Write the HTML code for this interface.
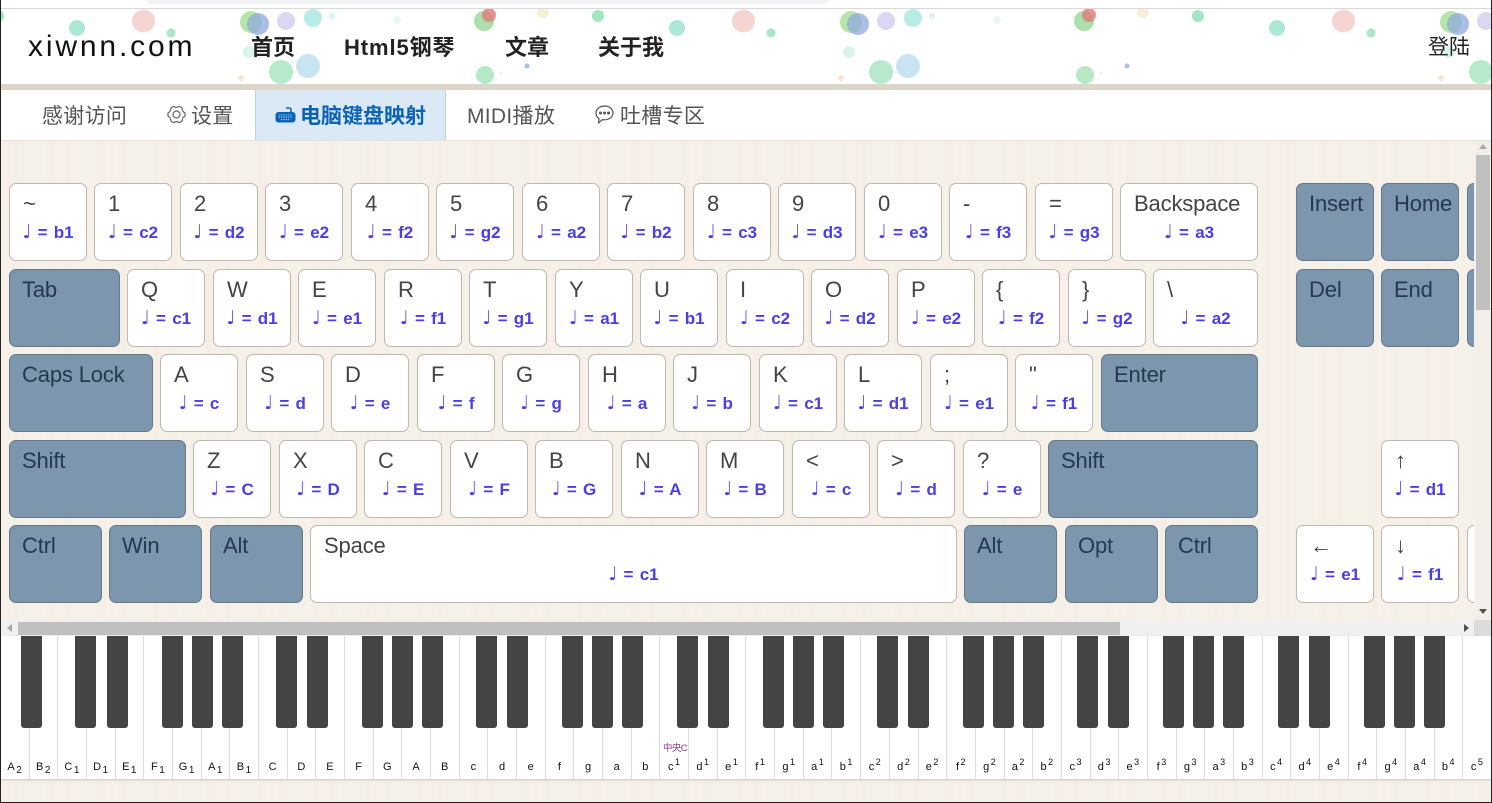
<!DOCTYPE html>
<html lang="zh"><head><meta charset="utf-8"><title>xiwnn.com</title>
<style>
html,body{margin:0;padding:0}
body{width:1492px;height:803px;position:relative;overflow:hidden;font-family:"Liberation Sans","Noto Sans CJK SC",sans-serif;background-color:#f5efe7;background-image:repeating-linear-gradient(90deg,rgba(255,255,255,.08) 0 13px,rgba(228,216,200,.05) 13px 19px,rgba(255,255,255,.03) 19px 47px,rgba(228,216,200,.06) 47px 53px)}
.abs{position:absolute}
#frame{position:absolute;inset:0;border:1px solid #222;border-width:0 1px 1px 1px;pointer-events:none;z-index:20}
#top{left:0;top:0;width:1492px;height:8px;background:#fff;border-bottom:1px solid #d9d9d9}
#pill{left:147px;top:0;width:683px;height:4px;background:#f1f3f4;border-radius:0 0 8px 8px}
#hdr{left:0;top:9px;width:1492px;height:75px;background:#fff;overflow:hidden}
#strip{left:0;top:84px;width:1492px;height:6px;background:#dcd6ca}
.nav{position:absolute;top:24px;line-height:30px;font-size:22px;font-weight:bold;color:#222;white-space:nowrap}
#logo{left:28px;top:21px;line-height:34px;font-size:30px;letter-spacing:2.85px;color:#111;position:absolute}
#tabs{left:0;top:90px;width:1492px;height:50px;background:#fff;border-bottom:1px solid #e8e2da;box-sizing:content-box}
.t{position:absolute;top:12px;line-height:30px;font-size:21px;letter-spacing:.3px;color:#555;white-space:nowrap}
#act{left:255px;top:0;width:189px;height:50px;background:#dbe8f5;border:solid #bcd0e2;border-width:0 1px;position:absolute}
#kb{left:1px;top:141px;width:1473px;height:479px;overflow:hidden}
.k,.d{position:absolute;box-sizing:border-box;width:78px;height:78px;border-radius:7px;border:1px solid #bfb8b0;background:#fff;color:#444}
.d{background:#7b96ad;border-color:#66788a;color:#26384c}
.k b,.d b{position:absolute;left:13px;top:5px;line-height:30px;font-size:22px;letter-spacing:-.15px;font-weight:normal;white-space:nowrap}
.d b{left:12px}
.k i{position:absolute;left:0;right:0;top:37px;line-height:24px;text-align:center;font-style:normal;font-weight:bold;font-size:17px;word-spacing:1.5px;color:#4a3ee8;white-space:nowrap}
.k u{font-family:"DejaVu Sans",sans-serif;font-size:19px;line-height:0;text-decoration:none}
#vt{left:1476px;top:141px;width:14px;height:479px;background:#f2eee9}
#vth{left:1476px;top:155px;width:14px;height:155px;background:#c0c0c0}
#ht{left:1px;top:621px;width:1473px;height:15px;background:#f0f0f0}
#hth{left:18px;top:622px;width:1102px;height:13px;background:#c0c0c0}
#cor{left:1474px;top:620px;width:17px;height:16px;background:#dcdcdc}
.ar{position:absolute;width:0;height:0;border:solid transparent}
#pi{left:1px;top:636px;width:1490px;height:143px;display:flex;background:#fff;box-shadow:0 1px 2px rgba(0,0,0,.18)}
#pi div{flex:1 1 0;box-sizing:border-box;border-right:1px solid #dcdcdc;text-align:center;padding-top:123px;font-size:11px;line-height:16px;color:#111;letter-spacing:.5px;white-space:nowrap}
#pi div:last-child{border-right:0}
#pi sub,#pi sup{font-size:9px;line-height:0;margin-left:1px}
#pi sub{vertical-align:-3px;font-size:10px}
#pi sup{vertical-align:5px}
.bk{position:absolute;top:636px;width:21px;height:92px;background:#444;border-radius:0 0 3px 3px}
#mid{left:663px;top:742px;font-size:9.5px;line-height:13px;color:#9c3a8c;white-space:nowrap;letter-spacing:-.6px}
</style></head><body>
<div class="abs" id="top"></div><div class="abs" id="pill"></div>
<div class="abs" id="hdr">
<svg width="1492" height="75" style="position:absolute;left:0;top:0"><defs><pattern id="bb" width="600" height="75" patternUnits="userSpaceOnUse" y="0">
<circle cx="-2" cy="7" r="6" fill="#a3e6c2"/><circle cx="143.500" cy="12" r="11.500" fill="#f4d5d2"/><circle cx="77" cy="19" r="8" fill="#abe8d8"/><circle cx="171" cy="24" r="4.500" fill="#a8e6c8"/><circle cx="251" cy="13" r="11" fill="#b6e6a6"/><circle cx="258" cy="15" r="11" fill="#8fa8e0" fill-opacity=".75"/><circle cx="286" cy="12" r="9" fill="#dad6f3"/><circle cx="313" cy="9" r="9" fill="#b7ede6"/><circle cx="332" cy="7" r="3" fill="#dff0f0"/><circle cx="397" cy="11" r="4" fill="#eef9ee"/><circle cx="484" cy="12" r="10" fill="#abe0ab"/><circle cx="489" cy="6" r="7" fill="#e07a7a" fill-opacity=".8"/><circle cx="543" cy="3" r="6" fill="#f6f0d8"/><circle cx="598" cy="7" r="6" fill="#a3e6c2"/>
<circle cx="249" cy="43" r="6" fill="#d9f4eb"/><circle cx="281" cy="63" r="12" fill="#b7e9cd"/><circle cx="308" cy="57" r="12" fill="#c7e4f0"/><circle cx="527" cy="57" r="2.500" fill="#a8c2e2"/><circle cx="485" cy="66" r="9" fill="#b7e9c7"/><circle cx="241" cy="69" r="3" fill="#fbe3d5"/><circle cx="501" cy="64" r="1.500" fill="#e8f5ee"/></pattern></defs>
<rect width="1492" height="75" fill="url(#bb)"/></svg>
<div id="logo">xiwnn.com</div>
<div class="nav" style="left:251px">首页</div>
<div class="nav" style="left:344px;letter-spacing:.9px">Html5钢琴</div>
<div class="nav" style="left:505px">文章</div>
<div class="nav" style="left:598px">关于我</div>
<div class="nav" style="left:1428px;font-size:21px;font-weight:normal">登陆</div>
</div>
<div class="abs" id="strip"></div>
<div class="abs" id="tabs">
<div class="t" style="left:42px">感谢访问</div>
<svg class="abs" style="left:167px;top:15px" width="19" height="19" viewBox="0 0 19 19" fill="none" stroke="#666" stroke-width="1.2" stroke-linejoin="round"><path d="M6.800 1.400c1.600 1.100 3.800 1.100 5.400 0 1.100.3 2.300 1 3 1.800-.2 1.900.9 3.800 2.700 4.600.3 1.100.3 2.300 0 3.400-1.800.8-2.900 2.700-2.700 4.600-.7.8-1.900 1.500-3 1.800-1.600-1.100-3.800-1.100-5.400 0-1.100-.3-2.300-1-3-1.800.2-1.900-.9-3.800-2.700-4.600-.3-1.100-.3-2.300 0-3.400 1.800-.8 2.900-2.700 2.700-4.600.7-.8 1.900-1.500 3-1.800z"/><circle cx="9.500" cy="9.500" r="3.500"/></svg>
<div class="t" style="left:191px">设置</div>
<div id="act">
<svg class="abs" style="left:19px;top:16px" width="21" height="18" viewBox="0 0 21 18"><path d="M16 6V3.500c0-1-1-1.500-2-1.500h-3" fill="none" stroke="#0b63b6" stroke-width="1.600"/><rect x="0.500" y="6" width="20" height="10.500" rx="3" fill="#0b63b6"/><path d="M3.500 9h14M3.500 11.200h14M6 13.600h9" stroke="#9cc4ea" stroke-width="1.100" stroke-dasharray="1.400 .9"/></svg>
<div class="t" style="left:44px;letter-spacing:0;font-weight:bold;color:#0b63b6">电脑键盘映射</div>
</div>
<div class="t" style="left:467px">MIDI播放</div>
<svg class="abs" style="left:595px;top:15px" width="19" height="19" viewBox="0 0 19 19" fill="none" stroke="#555" stroke-width="1.200"><path d="M9.500 1c4.700 0 8.500 3 8.500 6.900s-3.800 6.900-8.500 6.900c-.7 0-1.400-.1-2-.2L3.600 17.800l.4-4.200C2 12.300 1 10.200 1 7.900 1 4 4.800 1 9.500 1z"/><circle cx="5.500" cy="8" r=".9" fill="#555"/><circle cx="9.500" cy="8" r=".9" fill="#555"/><circle cx="13.500" cy="8" r=".9" fill="#555"/></svg>
<div class="t" style="left:620px">吐槽专区</div>
</div>

<div class="abs" id="kb">
<div class="k" style="left:8px;top:42px"><b>~</b><i><u>♩</u> = b1</i></div>
<div class="k" style="left:93px;top:42px"><b>1</b><i><u>♩</u> = c2</i></div>
<div class="k" style="left:179px;top:42px"><b>2</b><i><u>♩</u> = d2</i></div>
<div class="k" style="left:264px;top:42px"><b>3</b><i><u>♩</u> = e2</i></div>
<div class="k" style="left:350px;top:42px"><b>4</b><i><u>♩</u> = f2</i></div>
<div class="k" style="left:435px;top:42px"><b>5</b><i><u>♩</u> = g2</i></div>
<div class="k" style="left:521px;top:42px"><b>6</b><i><u>♩</u> = a2</i></div>
<div class="k" style="left:606px;top:42px"><b>7</b><i><u>♩</u> = b2</i></div>
<div class="k" style="left:692px;top:42px"><b>8</b><i><u>♩</u> = c3</i></div>
<div class="k" style="left:777px;top:42px"><b>9</b><i><u>♩</u> = d3</i></div>
<div class="k" style="left:863px;top:42px"><b>0</b><i><u>♩</u> = e3</i></div>
<div class="k" style="left:948px;top:42px"><b>-</b><i><u>♩</u> = f3</i></div>
<div class="k" style="left:1034px;top:42px"><b>=</b><i><u>♩</u> = g3</i></div>
<div class="k" style="left:1119px;top:42px;width:138px"><b>Backspace</b><i><u>♩</u> = a3</i></div>
<div class="d" style="left:1295px;top:42px"><b>Insert</b></div>
<div class="d" style="left:1380px;top:42px"><b>Home</b></div>
<div class="d" style="left:1466px;top:42px"></div>

<div class="d" style="left:8px;top:128px;width:111px"><b>Tab</b></div>
<div class="k" style="left:126px;top:128px"><b>Q</b><i><u>♩</u> = c1</i></div>
<div class="k" style="left:212px;top:128px"><b>W</b><i><u>♩</u> = d1</i></div>
<div class="k" style="left:297px;top:128px"><b>E</b><i><u>♩</u> = e1</i></div>
<div class="k" style="left:383px;top:128px"><b>R</b><i><u>♩</u> = f1</i></div>
<div class="k" style="left:468px;top:128px"><b>T</b><i><u>♩</u> = g1</i></div>
<div class="k" style="left:554px;top:128px"><b>Y</b><i><u>♩</u> = a1</i></div>
<div class="k" style="left:639px;top:128px"><b>U</b><i><u>♩</u> = b1</i></div>
<div class="k" style="left:725px;top:128px"><b>I</b><i><u>♩</u> = c2</i></div>
<div class="k" style="left:810px;top:128px"><b>O</b><i><u>♩</u> = d2</i></div>
<div class="k" style="left:896px;top:128px"><b>P</b><i><u>♩</u> = e2</i></div>
<div class="k" style="left:981px;top:128px"><b>{</b><i><u>♩</u> = f2</i></div>
<div class="k" style="left:1067px;top:128px"><b>}</b><i><u>♩</u> = g2</i></div>
<div class="k" style="left:1152px;top:128px;width:105px"><b>\</b><i><u>♩</u> = a2</i></div>
<div class="d" style="left:1295px;top:128px"><b>Del</b></div>
<div class="d" style="left:1380px;top:128px"><b>End</b></div>
<div class="d" style="left:1466px;top:128px"></div>

<div class="d" style="left:8px;top:213px;width:144px"><b>Caps Lock</b></div>
<div class="k" style="left:159px;top:213px"><b>A</b><i><u>♩</u> = c</i></div>
<div class="k" style="left:245px;top:213px"><b>S</b><i><u>♩</u> = d</i></div>
<div class="k" style="left:330px;top:213px"><b>D</b><i><u>♩</u> = e</i></div>
<div class="k" style="left:416px;top:213px"><b>F</b><i><u>♩</u> = f</i></div>
<div class="k" style="left:501px;top:213px"><b>G</b><i><u>♩</u> = g</i></div>
<div class="k" style="left:587px;top:213px"><b>H</b><i><u>♩</u> = a</i></div>
<div class="k" style="left:672px;top:213px"><b>J</b><i><u>♩</u> = b</i></div>
<div class="k" style="left:758px;top:213px"><b>K</b><i><u>♩</u> = c1</i></div>
<div class="k" style="left:843px;top:213px"><b>L</b><i><u>♩</u> = d1</i></div>
<div class="k" style="left:929px;top:213px"><b>;</b><i><u>♩</u> = e1</i></div>
<div class="k" style="left:1014px;top:213px"><b>"</b><i><u>♩</u> = f1</i></div>
<div class="d" style="left:1100px;top:213px;width:157px"><b>Enter</b></div>

<div class="d" style="left:8px;top:299px;width:177px"><b>Shift</b></div>
<div class="k" style="left:192px;top:299px"><b>Z</b><i><u>♩</u> = C</i></div>
<div class="k" style="left:278px;top:299px"><b>X</b><i><u>♩</u> = D</i></div>
<div class="k" style="left:363px;top:299px"><b>C</b><i><u>♩</u> = E</i></div>
<div class="k" style="left:449px;top:299px"><b>V</b><i><u>♩</u> = F</i></div>
<div class="k" style="left:534px;top:299px"><b>B</b><i><u>♩</u> = G</i></div>
<div class="k" style="left:620px;top:299px"><b>N</b><i><u>♩</u> = A</i></div>
<div class="k" style="left:705px;top:299px"><b>M</b><i><u>♩</u> = B</i></div>
<div class="k" style="left:791px;top:299px"><b>&lt;</b><i><u>♩</u> = c</i></div>
<div class="k" style="left:876px;top:299px"><b>&gt;</b><i><u>♩</u> = d</i></div>
<div class="k" style="left:962px;top:299px"><b>?</b><i><u>♩</u> = e</i></div>
<div class="d" style="left:1047px;top:299px;width:210px"><b>Shift</b></div>
<div class="k" style="left:1380px;top:299px"><b>↑</b><i><u>♩</u> = d1</i></div>

<div class="d" style="left:8px;top:384px;width:93px"><b>Ctrl</b></div>
<div class="d" style="left:108px;top:384px;width:93px"><b>Win</b></div>
<div class="d" style="left:209px;top:384px;width:93px"><b>Alt</b></div>
<div class="k" style="left:309px;top:384px;width:647px"><b>Space</b><i><u>♩</u> = c1</i></div>
<div class="d" style="left:963px;top:384px;width:93px"><b>Alt</b></div>
<div class="d" style="left:1064px;top:384px;width:93px"><b>Opt</b></div>
<div class="d" style="left:1164px;top:384px;width:93px"><b>Ctrl</b></div>
<div class="k" style="left:1295px;top:384px"><b>←</b><i><u>♩</u> = e1</i></div>
<div class="k" style="left:1380px;top:384px"><b>↓</b><i><u>♩</u> = f1</i></div>
<div class="k" style="left:1466px;top:384px"></div>
</div>

<div class="abs" id="vt"></div><div class="abs" id="vth"></div>
<div class="ar" style="left:1479px;top:144px;border-width:0 4px 5px;border-bottom-color:#a8a8a8"></div>
<div class="ar" style="left:1479px;top:609px;border-width:5px 4px 0;border-top-color:#505050"></div>
<div class="abs" id="ht"></div><div class="abs" id="hth"></div><div class="abs" id="cor"></div>
<div class="ar" style="left:7px;top:624px;border-width:4px 5px 4px 0;border-right-color:#a8a8a8"></div>
<div class="ar" style="left:1464px;top:624px;border-width:4px 0 4px 5px;border-left-color:#505050"></div>

<div class="abs" id="pi">
<div>A<sub>2</sub></div><div>B<sub>2</sub></div><div>C<sub>1</sub></div><div>D<sub>1</sub></div><div>E<sub>1</sub></div><div>F<sub>1</sub></div><div>G<sub>1</sub></div><div>A<sub>1</sub></div><div>B<sub>1</sub></div>
<div>C</div><div>D</div><div>E</div><div>F</div><div>G</div><div>A</div><div>B</div>
<div>c</div><div>d</div><div>e</div><div>f</div><div>g</div><div>a</div><div>b</div>
<div>c<sup>1</sup></div><div>d<sup>1</sup></div><div>e<sup>1</sup></div><div>f<sup>1</sup></div><div>g<sup>1</sup></div><div>a<sup>1</sup></div><div>b<sup>1</sup></div>
<div>c<sup>2</sup></div><div>d<sup>2</sup></div><div>e<sup>2</sup></div><div>f<sup>2</sup></div><div>g<sup>2</sup></div><div>a<sup>2</sup></div><div>b<sup>2</sup></div>
<div>c<sup>3</sup></div><div>d<sup>3</sup></div><div>e<sup>3</sup></div><div>f<sup>3</sup></div><div>g<sup>3</sup></div><div>a<sup>3</sup></div><div>b<sup>3</sup></div>
<div>c<sup>4</sup></div><div>d<sup>4</sup></div><div>e<sup>4</sup></div><div>f<sup>4</sup></div><div>g<sup>4</sup></div><div>a<sup>4</sup></div><div>b<sup>4</sup></div>
<div>c<sup>5</sup></div>
</div>
<div class="abs" id="mid">中央C</div>
<div class="bk" style="left:21px"></div>
<div class="bk" style="left:75px"></div><div class="bk" style="left:107px"></div>
<div class="bk" style="left:162px"></div><div class="bk" style="left:192px"></div><div class="bk" style="left:222px"></div>
<div class="bk" style="left:276px"></div><div class="bk" style="left:307px"></div>
<div class="bk" style="left:362px"></div><div class="bk" style="left:392px"></div><div class="bk" style="left:422px"></div>
<div class="bk" style="left:476px"></div><div class="bk" style="left:507px"></div>
<div class="bk" style="left:562px"></div><div class="bk" style="left:592px"></div><div class="bk" style="left:622px"></div>
<div class="bk" style="left:677px"></div><div class="bk" style="left:708px"></div>
<div class="bk" style="left:763px"></div><div class="bk" style="left:793px"></div><div class="bk" style="left:823px"></div>
<div class="bk" style="left:877px"></div><div class="bk" style="left:908px"></div>
<div class="bk" style="left:963px"></div><div class="bk" style="left:993px"></div><div class="bk" style="left:1023px"></div>
<div class="bk" style="left:1077px"></div><div class="bk" style="left:1108px"></div>
<div class="bk" style="left:1163px"></div><div class="bk" style="left:1193px"></div><div class="bk" style="left:1223px"></div>
<div class="bk" style="left:1278px"></div><div class="bk" style="left:1309px"></div>
<div class="bk" style="left:1364px"></div><div class="bk" style="left:1394px"></div><div class="bk" style="left:1424px"></div>
<div id="frame"></div>
</body></html>
